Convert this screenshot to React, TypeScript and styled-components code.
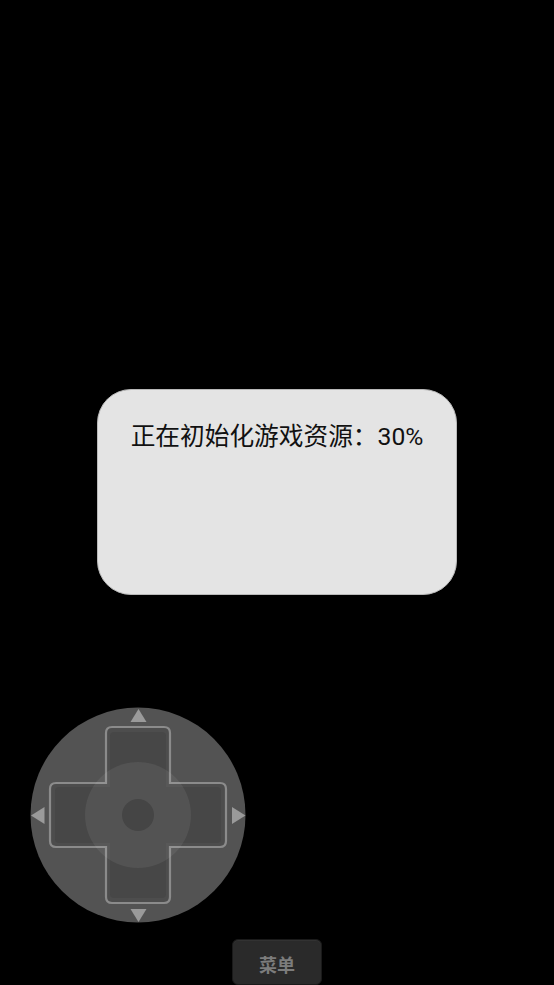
import React from 'react';
import styled, { createGlobalStyle } from 'styled-components';

const GlobalStyle = createGlobalStyle`
  html, body {
    margin: 0;
    padding: 0;
    background: #000;
  }
  * {
    box-sizing: border-box;
  }
`;

const Screen = styled.div`
  width: 100%;
  min-height: 100vh;
  background: #000;
  display: flex;
  flex-direction: column;
  padding-top: 389px;
  font-family: Roboto, "Noto Sans CJK SC", sans-serif;
`;

const Dialog = styled.div`
  align-self: center;
  width: 360px;
  height: 206px;
  background: #e4e4e4;
  border: 1px solid #b9b9b9;
  border-radius: 34px;
  padding-top: 34px;
  display: flex;
  justify-content: center;
`;

const Message = styled.div`
  font-size: 24.7px;
  line-height: 25px;
  color: #111;
  white-space: nowrap;
`;

const Controls = styled.div`
  margin-top: 112px;
  display: flex;
  flex-direction: column;
`;

const Pad = styled.svg`
  display: block;
  margin-left: 30px;
  width: 216px;
  height: 216px;
`;

const MenuButton = styled.button`
  align-self: center;
  margin-top: 16px;
  width: 90px;
  height: 46px;
  border-radius: 6px;
  background: #2a2a2a;
  border: 1px solid #1a1a1a;
  box-shadow: inset 0 1px 0 rgba(255, 255, 255, 0.04);
  color: #7c7c7c;
  font-family: "Noto Sans CJK SC", sans-serif;
  font-size: 18px;
  font-weight: 700;
  padding: 4px 0 0;
`;

const c = 108;
const a = 32;
const L = 88;
const r = 6;

const crossPath = [
  `M ${c - a + r} ${c - L}`,
  `H ${c + a - r}`,
  `Q ${c + a} ${c - L} ${c + a} ${c - L + r}`,
  `V ${c - a}`,
  `H ${c + L - r}`,
  `Q ${c + L} ${c - a} ${c + L} ${c - a + r}`,
  `V ${c + a - r}`,
  `Q ${c + L} ${c + a} ${c + L - r} ${c + a}`,
  `H ${c + a}`,
  `V ${c + L - r}`,
  `Q ${c + a} ${c + L} ${c + a - r} ${c + L}`,
  `H ${c - a + r}`,
  `Q ${c - a} ${c + L} ${c - a} ${c + L - r}`,
  `V ${c + a}`,
  `H ${c - L + r}`,
  `Q ${c - L} ${c + a} ${c - L} ${c + a - r}`,
  `V ${c - a + r}`,
  `Q ${c - L} ${c - a} ${c - L + r} ${c - a}`,
  `H ${c - a}`,
  `V ${c - L + r}`,
  `Q ${c - a} ${c - L} ${c - a + r} ${c - L}`,
  'Z',
].join(' ');

const DPad = () => (
  <Pad viewBox="0 0 216 216">
    <circle cx={c} cy={c} r={107.5} fill="#535353" />
    <path d={crossPath} fill="#4d4d4d" stroke="#8b8b8b" strokeWidth={2.2} />
    {/* arm panels */}
    <rect x={c - a + 4} y={c - L + 5} width={2 * a - 8} height={L} rx={4} fill="#474747" />
    <rect x={c - a + 4} y={c - 5} width={2 * a - 8} height={L} rx={4} fill="#474747" />
    <rect x={c - L + 5} y={c - a + 4} width={L} height={2 * a - 8} rx={4} fill="#474747" />
    <rect x={c - 5} y={c - a + 4} width={L} height={2 * a - 8} rx={4} fill="#474747" />
    <rect x={c - a + 4} y={c - a + 4} width={2 * a - 8} height={2 * a - 8} fill="#474747" />
    <circle cx={c} cy={c} r={53} fill="rgba(255,255,255,0.065)" />
    <circle cx={c} cy={c} r={16} fill="#454545" />
    {/* arrows */}
    <polygon points="108.5,2 100.5,15 116.5,15" fill="#9a9a9a" />
    <polygon points="108.5,215 100.5,202 116.5,202" fill="#9a9a9a" />
    <polygon points="1,108.5 14.5,100 14.5,117" fill="#9a9a9a" />
    <polygon points="215.5,108.5 202,100 202,117" fill="#9a9a9a" />
  </Pad>
);

export default function App() {
  return (
    <>
      <GlobalStyle />
      <Screen>
        <Dialog>
          <Message>正在初始化游戏资源：30%</Message>
        </Dialog>
        <Controls>
          <DPad />
          <MenuButton>菜单</MenuButton>
        </Controls>
      </Screen>
    </>
  );
}
